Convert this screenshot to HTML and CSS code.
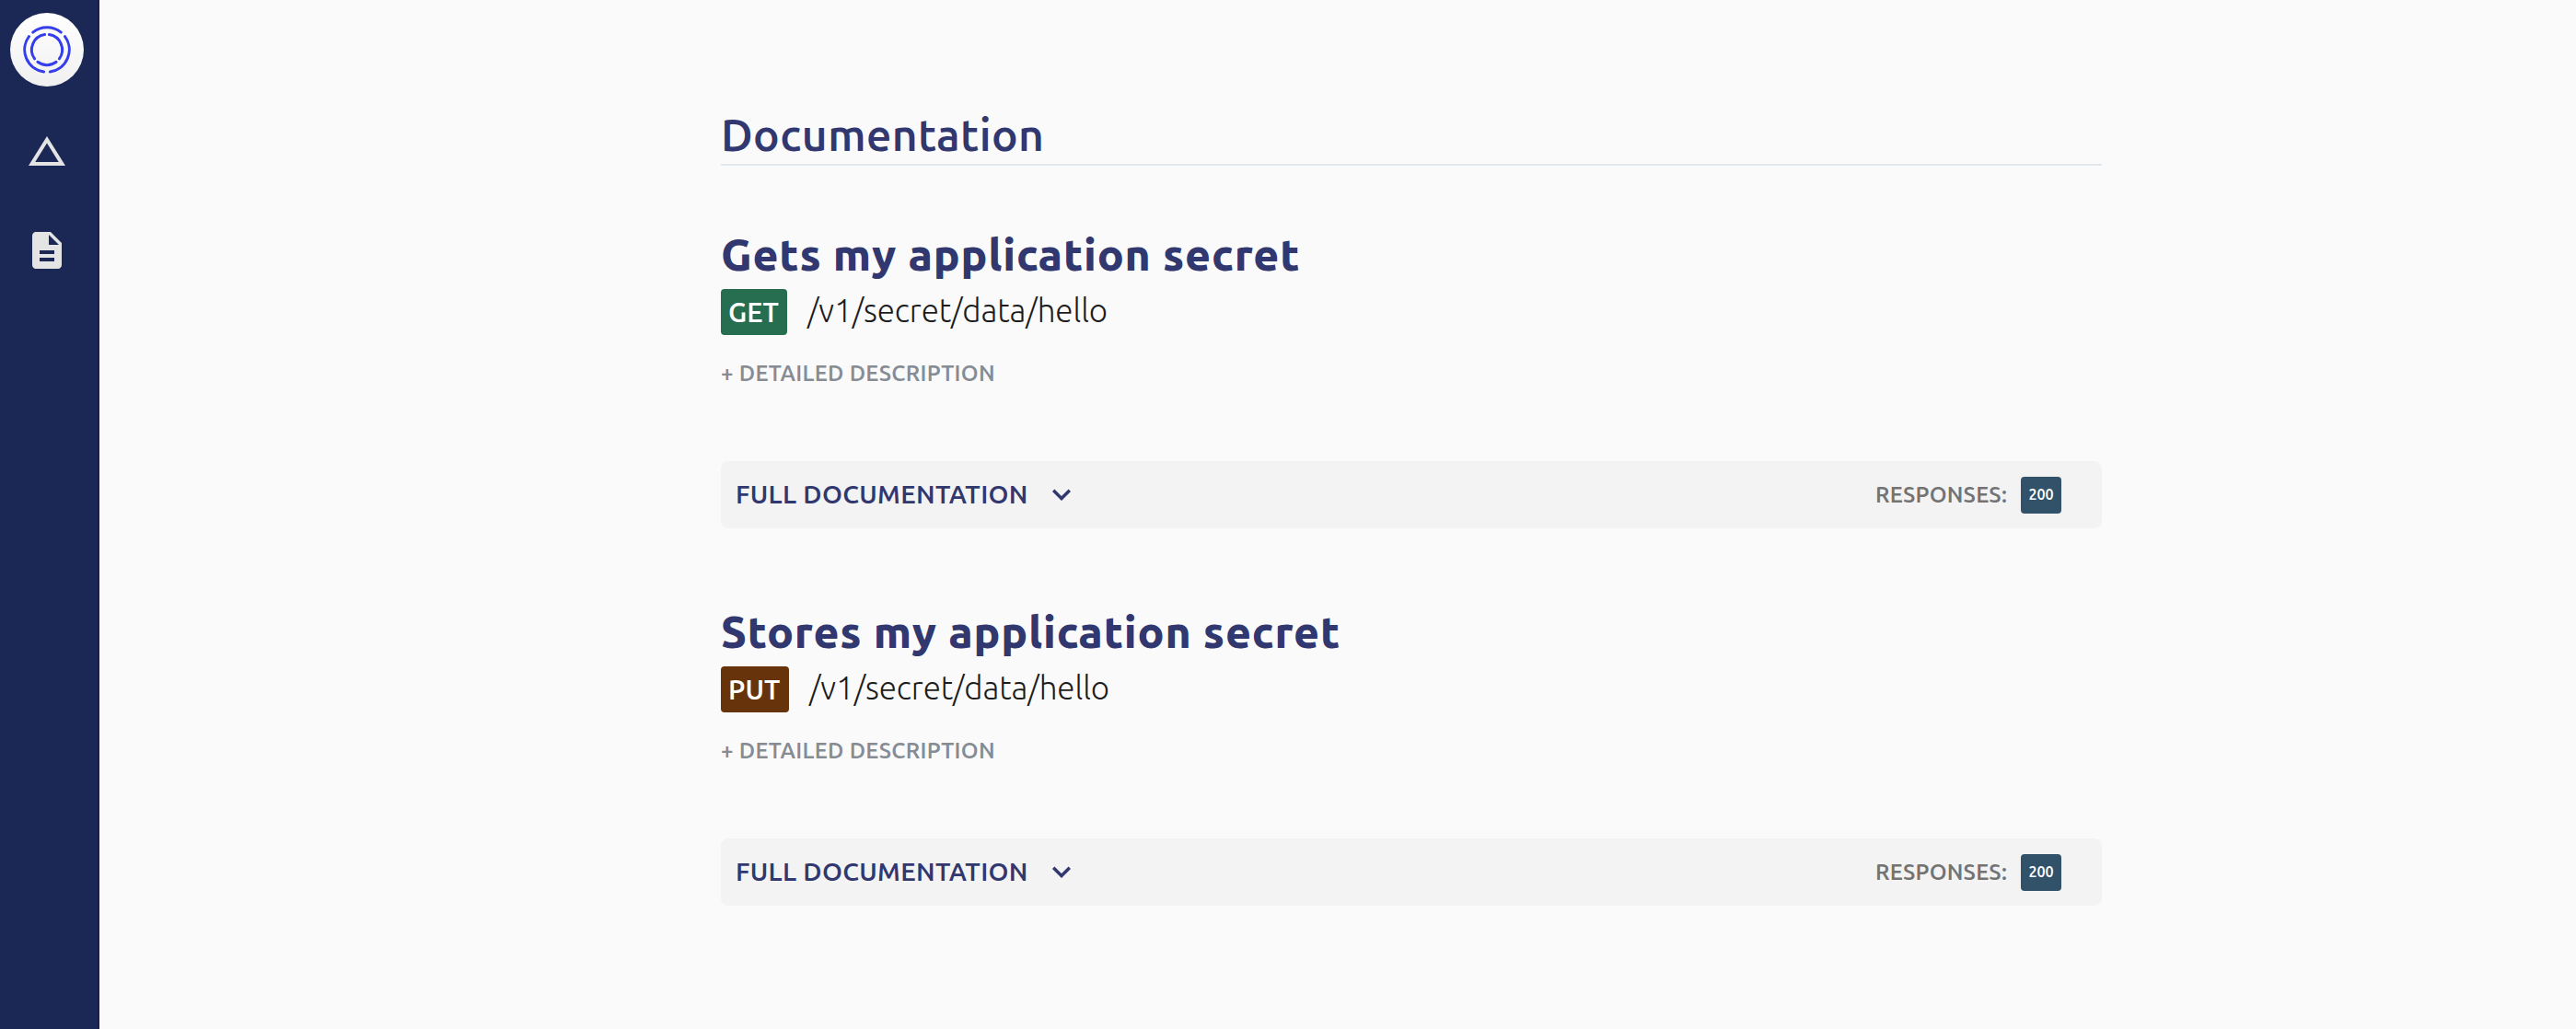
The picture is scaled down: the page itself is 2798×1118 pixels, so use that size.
FILE: index.html
```html
<!DOCTYPE html>
<html lang="en">
<head>
<meta charset="utf-8">
<title>Documentation</title>
<link rel="stylesheet" href="styles.css">
</head>
<body>
<nav class="sidebar">
  <a class="logo" href="#" aria-label="Home">
    <svg width="52" height="52" viewBox="0 0 52 52" fill="none" stroke="#353eea" stroke-width="3" stroke-linecap="round">
      <path d="M10.7 7.1A24.3 24.3 0 0 1 41.3 7.1"/>
      <path d="M45.5 11.6A24.3 24.3 0 0 1 29.4 50.1"/>
      <path d="M22.6 50.1A24.3 24.3 0 0 1 6.5 11.6"/>
      <path d="M28.4 9.5A16.7 16.7 0 0 1 39.4 35.8"/>
      <path d="M23.6 9.5A16.7 16.7 0 0 0 12.6 35.8"/>
      <path d="M15.9 39.3A16.7 16.7 0 0 0 36.1 39.3"/>
    </svg>
  </a>
  <a class="nav-item" href="#" aria-label="Overview">
    <svg width="48" height="48" viewBox="0 0 24 24" fill="#e4e4e4"><path d="M12 7.77L18.39 18H5.61L12 7.77M12 4L2 20h20L12 4z"/></svg>
  </a>
  <a class="nav-item" href="#" aria-label="Documentation">
    <svg width="48" height="48" viewBox="0 0 24 24" fill="#e4e4e4"><path d="M14 2H6c-1.100 0-1.990.9-1.990 2L4 20c0 1.100.890 2 1.990 2H18c1.100 0 2-.9 2-2V8l-6-6zm2 16H8v-2h8v2zm0-4H8v-2h8v2zm-3-5V3.500L18.500 9H13z"/></svg>
  </a>
</nav>
<main class="content">
  <h1 class="title">Documentation</h1>

  <section class="endpoint">
    <h2 class="name">Gets my application secret</h2>
    <div class="route"><span class="method get">GET</span><span class="path">/v1/secret/data/hello</span></div>
    <div class="detail">+ DETAILED DESCRIPTION</div>
    <div class="bar">
      <span class="full">FULL DOCUMENTATION</span>
      <svg class="chevron" width="20" height="14" viewBox="0 0 20 14" fill="none" stroke="#31376f" stroke-width="3.4"><path d="M1.200 1.700L10 10.500L18.800 1.700"/></svg>
      <span class="responses">RESPONSES:</span>
      <span class="status">200</span>
    </div>
  </section>

  <section class="endpoint">
    <h2 class="name">Stores my application secret</h2>
    <div class="route"><span class="method put">PUT</span><span class="path">/v1/secret/data/hello</span></div>
    <div class="detail">+ DETAILED DESCRIPTION</div>
    <div class="bar">
      <span class="full">FULL DOCUMENTATION</span>
      <svg class="chevron" width="20" height="14" viewBox="0 0 20 14" fill="none" stroke="#31376f" stroke-width="3.4"><path d="M1.200 1.700L10 10.500L18.800 1.700"/></svg>
      <span class="responses">RESPONSES:</span>
      <span class="status">200</span>
    </div>
  </section>
</main>
</body>
</html>
```
FILE: styles.css
```css
* { box-sizing: border-box; }
body {
  margin: 0;
  display: flex;
  height: 1118px;
  overflow: hidden;
  background: #fafafa;
  color: #1c1c1c;
  font-family: "Ubuntu Sans", Ubuntu, "Noto Sans", sans-serif;
}
.sidebar {
  flex: none;
  width: 108px;
  padding: 14px 0 0 11px;
  background: #1b2856;
  border-right: 2px solid #1a1f52;
}
.logo {
  display: flex;
  align-items: center;
  justify-content: center;
  width: 80px;
  height: 80px;
  margin-bottom: 46px;
  border-radius: 50%;
  background: linear-gradient(#fff, #f0f0f0);
}
.nav-item {
  display: flex;
  justify-content: center;
  width: 80px;
  height: 48px;
  margin-bottom: 60px;
}
.content {
  flex: none;
  width: 1500px;
  margin-left: 675px;
  padding-top: 114px;
}
h1, h2 {
  height: 64px;
  margin: 0;
  color: #31376f;
  font-size: 48px;
  line-height: 68px;
  white-space: nowrap;
}
.title {
  height: 66px;
  font-weight: 600;
  letter-spacing: 0.42px;
  border-bottom: 2px solid #e2e7ec;
  margin-bottom: 64px;
}
.name { font-weight: 800; letter-spacing: 0.8px; }
.endpoint { margin-bottom: 80px; }
.route {
  display: flex;
  align-items: baseline;
  gap: 22px;
  height: 50px;
  margin: 6px 0 26px;
}
.method {
  width: 72px;
  height: 50px;
  padding-left: 8px;
  border-radius: 4px;
  color: #fff;
  font-size: 29.5px;
  font-weight: 600;
  line-height: 52px;
}
.get { background: #276d4f; }
.put { width: 74px; background: #67330b; }
.path {
  font-size: 35px;
  font-weight: 300;
  line-height: 40px;
  letter-spacing: -0.1px;
}
.detail {
  height: 30px;
  margin-bottom: 81px;
  color: #858c94;
  font-size: 24px;
  font-weight: 600;
  line-height: 31px;
  letter-spacing: 0.3px;
}
.bar {
  display: flex;
  align-items: center;
  height: 73px;
  padding: 0 44px 0 16px;
  border-radius: 8px;
  background: #f3f3f3;
}
.full {
  color: #31376f;
  font-size: 28px;
  font-weight: 600;
  line-height: 30px;
  letter-spacing: 0.34px;
}
.chevron { margin: 1px 0 0 26px; }
.responses {
  margin-left: auto;
  color: #737373;
  font-size: 24px;
  font-weight: 600;
  line-height: 30px;
  letter-spacing: 0.2px;
}
.status {
  width: 44px;
  height: 40px;
  margin: 1px 0 0 15px;
  border-radius: 4px;
  background: #325269;
  color: #fff;
  font-size: 16px;
  font-weight: 600;
  line-height: 39px;
  text-align: center;
}
```
